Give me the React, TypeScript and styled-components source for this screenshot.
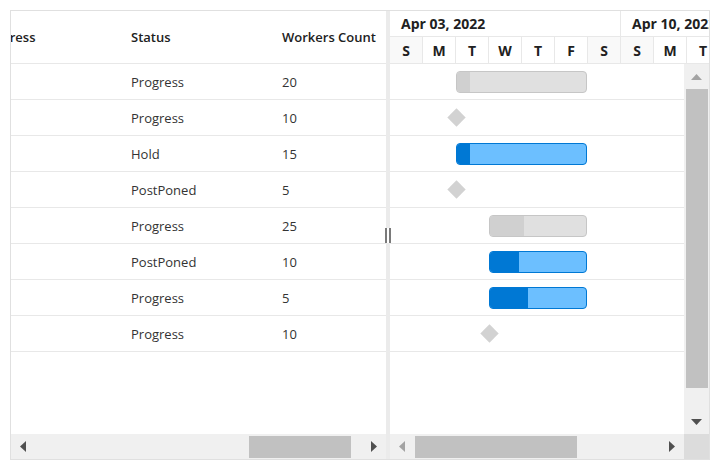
import React, { useLayoutEffect, useRef } from 'react';
import styled, { createGlobalStyle } from 'styled-components';

const GlobalStyle = createGlobalStyle`
  html, body { margin: 0; padding: 0; background: #ffffff; }
  body { font-family: "Open Sans", "Noto Sans", sans-serif; }
`;

const Page = styled.div`
  padding: 10px;
`;

const Gantt = styled.div`
  width: 700px;
  height: 450px;
  box-sizing: border-box;
  border: 1px solid #e0e0e0;
  display: flex;
  overflow: hidden;
  background: #ffffff;
`;

/* ---------- grid (left) ---------- */
const GridPane = styled.div`
  width: 375px;
  flex-shrink: 0;
  display: flex;
  flex-direction: column;
`;

const GridViewport = styled.div`
  flex: 1;
  overflow: hidden;
`;

const GridTable = styled.div`
  width: 451px;
`;

const GridRow = styled.div<{ $header?: boolean }>`
  display: grid;
  grid-template-columns: 150px 151px 150px;
  align-items: center;
  height: ${(p) => (p.$header ? 52 : 35)}px;
  border-bottom: 1px solid #e8e8e8;
`;

const Cell = styled.div<{ $header?: boolean }>`
  padding-left: 12px;
  font-size: 13px;
  white-space: nowrap;
  overflow: hidden;
  color: ${(p) => (p.$header ? '#212121' : '#333333')};
  font-weight: ${(p) => (p.$header ? 600 : 400)};
`;

/* ---------- splitter ---------- */
const Splitter = styled.div`
  width: 4px;
  flex-shrink: 0;
  background: #ebebeb;
  display: flex;
  align-items: center;
  justify-content: center;
`;

const SplitterGrip = styled.div`
  flex-shrink: 0;
  width: 2px;
  height: 15px;
  background: #ffffff;
  border-left: 2px solid #7a7a7a;
  border-right: 2px solid #7a7a7a;
`;

/* ---------- chart (right) ---------- */
const ChartPane = styled.div`
  flex: 1;
  min-width: 0;
  display: flex;
  flex-direction: column;
`;

const Timeline = styled.div`
  flex-shrink: 0;
  overflow: hidden;
`;

const TierRow = styled.div<{ $height: number }>`
  display: flex;
  height: ${(p) => p.$height}px;
  border-bottom: 1px solid #e8e8e8;
`;

const WeekCell = styled.div`
  flex-shrink: 0;
  width: 231px;
  box-sizing: border-box;
  border-right: 1px solid #e8e8e8;
  padding-left: 11px;
  font-size: 14px;
  font-weight: 700;
  color: #212121;
  display: flex;
  align-items: center;
  white-space: nowrap;
`;

const DayCell = styled.div<{ $weekend: boolean }>`
  flex-shrink: 0;
  width: 33px;
  box-sizing: border-box;
  border-right: 1px solid #e8e8e8;
  background: ${(p) => (p.$weekend ? '#f9f9f9' : '#ffffff')};
  display: flex;
  align-items: center;
  justify-content: center;
  font-size: 14px;
  font-weight: 700;
  color: #212121;
`;

const ChartBody = styled.div`
  flex: 1;
  min-height: 0;
  display: flex;
`;

const RowsArea = styled.div`
  flex: 1;
  min-width: 0;
  overflow: hidden;
`;

const ChartRow = styled.div`
  position: relative;
  height: 35px;
  border-bottom: 1px solid #e8e8e8;
`;

const TaskBar = styled.div<{ $tone: 'gray' | 'blue' }>`
  position: absolute;
  top: 7px;
  height: 22px;
  box-sizing: border-box;
  border-radius: 4px;
  overflow: hidden;
  border: 1px solid ${(p) => (p.$tone === 'gray' ? '#c6c6c6' : '#0078d4')};
  background: ${(p) => (p.$tone === 'gray' ? '#e0e0e0' : '#6cbfff')};
`;

const TaskProgress = styled.div<{ $tone: 'gray' | 'blue' }>`
  height: 100%;
  background: ${(p) => (p.$tone === 'gray' ? '#d0d0d0' : '#0078d4')};
`;

const Milestone = styled.div`
  position: absolute;
  top: 11px;
  width: 13px;
  height: 13px;
  background: #d2d2d2;
  transform: rotate(45deg);
`;

/* ---------- scrollbars ---------- */
const VScroll = styled.div`
  width: 25px;
  flex-shrink: 0;
  background: #f0f0f0;
  display: flex;
  flex-direction: column;
`;

const VArrow = styled.div`
  height: 25px;
  flex-shrink: 0;
  display: flex;
  align-items: center;
  justify-content: center;
`;

const VTrack = styled.div`
  flex: 1;
  display: flex;
  flex-direction: column;
  padding: 0 1px 0 2px;
`;

const VThumb = styled.div`
  background: #c1c1c1;
`;

const BottomRow = styled.div`
  display: flex;
  height: 25px;
  flex-shrink: 0;
`;

const HScroll = styled.div`
  flex: 1;
  min-width: 0;
  height: 25px;
  background: #f0f0f0;
  display: flex;
`;

const HArrow = styled.div`
  width: 24px;
  flex-shrink: 0;
  display: flex;
  align-items: center;
  justify-content: center;
`;

const HTrack = styled.div`
  flex: 1;
  min-width: 0;
  display: flex;
  padding: 2px 0 1px 0;
`;

const HThumb = styled.div`
  background: #c1c1c1;
  flex-shrink: 0;
`;

const Corner = styled.div`
  width: 25px;
  flex-shrink: 0;
  background: #dcdcdc;
`;

/* ---------- icons ---------- */
const ENABLED = '#505050';
const DISABLED = '#a3a3a3';

const ArrowLeft = ({ color }: { color: string }) => (
  <svg width="6" height="11" viewBox="0 0 6 11">
    <polygon points="6,0 6,11 0,5.5" fill={color} />
  </svg>
);
const ArrowRight = ({ color }: { color: string }) => (
  <svg width="6" height="11" viewBox="0 0 6 11">
    <polygon points="0,0 0,11 6,5.5" fill={color} />
  </svg>
);
const ArrowUp = ({ color }: { color: string }) => (
  <svg width="11" height="6" viewBox="0 0 11 6">
    <polygon points="0,6 11,6 5.5,0" fill={color} />
  </svg>
);
const ArrowDown = ({ color }: { color: string }) => (
  <svg width="11" height="6" viewBox="0 0 11 6">
    <polygon points="0,0 11,0 5.5,6" fill={color} />
  </svg>
);

/* ---------- data ---------- */
type Task =
  | { kind: 'bar'; tone: 'gray' | 'blue'; start: number; days: number; progress: number }
  | { kind: 'milestone'; start: number };

interface Row {
  progress: number;
  status: string;
  workers: number;
  task: Task;
}

const rows: Row[] = [
  { progress: 10, status: 'Progress', workers: 20, task: { kind: 'bar', tone: 'gray', start: 2, days: 4, progress: 10 } },
  { progress: 0, status: 'Progress', workers: 10, task: { kind: 'milestone', start: 2 } },
  { progress: 10, status: 'Hold', workers: 15, task: { kind: 'bar', tone: 'blue', start: 2, days: 4, progress: 10 } },
  { progress: 0, status: 'PostPoned', workers: 5, task: { kind: 'milestone', start: 2 } },
  { progress: 35, status: 'Progress', workers: 25, task: { kind: 'bar', tone: 'gray', start: 3, days: 3, progress: 35 } },
  { progress: 30, status: 'PostPoned', workers: 10, task: { kind: 'bar', tone: 'blue', start: 3, days: 3, progress: 30 } },
  { progress: 40, status: 'Progress', workers: 5, task: { kind: 'bar', tone: 'blue', start: 3, days: 3, progress: 40 } },
  { progress: 0, status: 'Progress', workers: 10, task: { kind: 'milestone', start: 3 } },
];

const DAY = 33;
const weeks = ['Apr 03, 2022', 'Apr 10, 2022'];
const dayLetters = ['S', 'M', 'T', 'W', 'T', 'F', 'S'];

const renderTask = (task: Task) => {
  if (task.kind === 'milestone') {
    return <Milestone style={{ left: task.start * DAY - 6.5 }} />;
  }
  const width = task.days * DAY - 1;
  return (
    <TaskBar $tone={task.tone} style={{ left: task.start * DAY, width }}>
      <TaskProgress $tone={task.tone} style={{ width: `${task.progress}%` }} />
    </TaskBar>
  );
};

export default function App() {
  const gridRef = useRef<HTMLDivElement>(null);

  useLayoutEffect(() => {
    if (gridRef.current) gridRef.current.scrollLeft = 42;
  }, []);

  return (
    <Page>
      <GlobalStyle />
      <Gantt>
        <GridPane>
          <GridViewport ref={gridRef}>
            <GridTable>
              <GridRow $header>
                <Cell $header>Progress</Cell>
                <Cell $header>Status</Cell>
                <Cell $header>Workers Count</Cell>
              </GridRow>
              {rows.map((r, i) => (
                <GridRow key={i}>
                  <Cell>{r.progress}</Cell>
                  <Cell>{r.status}</Cell>
                  <Cell>{r.workers}</Cell>
                </GridRow>
              ))}
            </GridTable>
          </GridViewport>
          <BottomRow>
            <HScroll>
              <HArrow>
                <ArrowLeft color={ENABLED} />
              </HArrow>
              <HTrack>
                <HThumb style={{ marginLeft: 214, width: 102 }} />
              </HTrack>
              <HArrow>
                <ArrowRight color={ENABLED} />
              </HArrow>
            </HScroll>
          </BottomRow>
        </GridPane>

        <Splitter>
          <SplitterGrip />
        </Splitter>

        <ChartPane>
          <Timeline>
            <TierRow $height={25}>
              {weeks.map((w) => (
                <WeekCell key={w}>{w}</WeekCell>
              ))}
            </TierRow>
            <TierRow $height={26}>
              {weeks.flatMap((w) =>
                dayLetters.map((d, i) => (
                  <DayCell key={w + i} $weekend={i === 0 || i === 6}>
                    {d}
                  </DayCell>
                ))
              )}
            </TierRow>
          </Timeline>
          <ChartBody>
            <RowsArea>
              {rows.map((r, i) => (
                <ChartRow key={i}>{renderTask(r.task)}</ChartRow>
              ))}
            </RowsArea>
            <VScroll>
              <VArrow>
                <ArrowUp color={DISABLED} />
              </VArrow>
              <VTrack>
                <VThumb style={{ height: 299 }} />
              </VTrack>
              <VArrow>
                <ArrowDown color={ENABLED} />
              </VArrow>
            </VScroll>
          </ChartBody>
          <BottomRow>
            <HScroll>
              <HArrow>
                <ArrowLeft color={DISABLED} />
              </HArrow>
              <HTrack>
                <HThumb style={{ marginLeft: 1, width: 162 }} />
              </HTrack>
              <HArrow>
                <ArrowRight color={ENABLED} />
              </HArrow>
            </HScroll>
            <Corner />
          </BottomRow>
        </ChartPane>
      </Gantt>
    </Page>
  );
}
